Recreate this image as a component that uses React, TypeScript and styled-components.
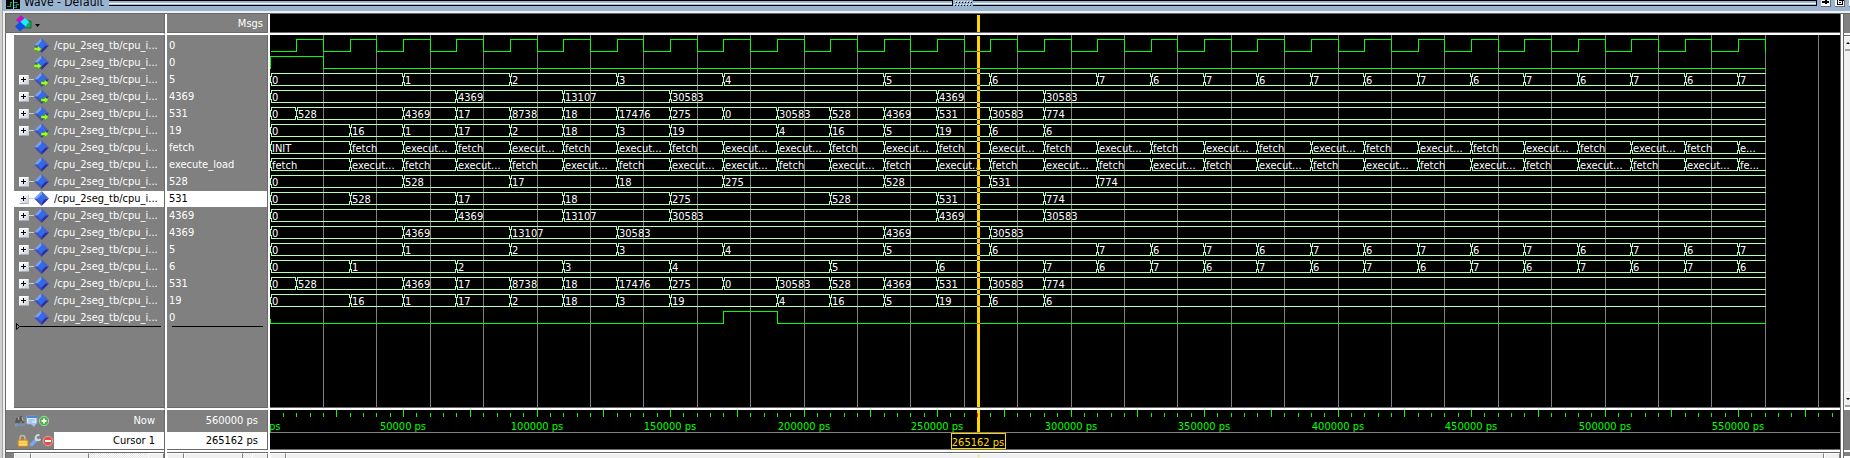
import React from "react";
import styled, { createGlobalStyle } from "styled-components";

/* ---------- data ---------- */

type Step = [number, string];
type Port = "in" | "out" | "none";
interface Signal {
  value: string;
  port: Port;
  bus?: Step[];
  bit?: Step[];
  expandable?: boolean;
  selected?: boolean;
}

const END = 560;
const F = "fetch";
const E = "execut...";

const alternate = (from: number, a: string, b: string): Step[] => {
  const out: Step[] = [];
  for (let t = from, i = 0; t < END; t += 20, i++) out.push([t, i % 2 ? b : a]);
  return out;
};

const clock: Step[] = [[0, "0"]];
for (let t = 10, i = 1; t <= END; t += 10, i++) clock.push([t, i % 2 ? "1" : "0"]);

const pc: Step[] = [[0, "0"], [50, "1"], [90, "2"], [130, "3"], [170, "4"], [230, "5"], [270, "6"], ...alternate(310, "7", "6")];
const nextPc: Step[] = [[0, "0"], [30, "1"], [70, "2"], [110, "3"], [150, "4"], [210, "5"], [250, "6"], [290, "7"], ...alternate(310, "6", "7")];
const dataA: Step[] = [[0, "0"], [70, "4369"], [110, "13107"], [150, "30583"], [250, "4369"], [290, "30583"]];
const dataB: Step[] = [[0, "0"], [50, "4369"], [90, "13107"], [130, "30583"], [230, "4369"], [270, "30583"]];
const memData: Step[] = [
  [0, "0"], [10, "528"], [50, "4369"], [70, "17"], [90, "8738"], [110, "18"], [130, "17476"], [150, "275"],
  [170, "0"], [190, "30583"], [210, "528"], [230, "4369"], [250, "531"], [270, "30583"], [290, "774"],
];
const address: Step[] = [
  [0, "0"], [30, "16"], [50, "1"], [70, "17"], [90, "2"], [110, "18"], [130, "3"], [150, "19"],
  [190, "4"], [210, "16"], [230, "5"], [250, "19"], [270, "6"], [290, "6"],
];
const state: Step[] = [
  [0, "INIT"], [30, F], [50, E], [70, F], [90, E], [110, F], [130, E], [150, F], [170, E], [190, E],
  [210, F], [230, E], [250, F], [270, E], [290, F], ...alternate(310, E, F).slice(0, -1), [550, "e..."],
];
const nextState: Step[] = [
  [0, F], [30, E], [50, F], [70, E], [90, F], [110, E], [130, F], [150, E], [170, E], [190, F],
  [210, E], [230, F], [250, E], [270, F], [290, E], ...alternate(310, F, E).slice(0, -1), [550, "fe..."],
];
const instr: Step[] = [[0, "0"], [50, "528"], [90, "17"], [130, "18"], [170, "275"], [230, "528"], [270, "531"], [310, "774"]];
const nextInstr: Step[] = [[0, "0"], [30, "528"], [70, "17"], [110, "18"], [150, "275"], [210, "528"], [250, "531"], [290, "774"]];

const signals: Signal[] = [
  { value: "0", port: "in", bit: clock },
  { value: "0", port: "in", bit: [[0, "1"], [20, "0"]] },
  { value: "5", port: "out", bus: pc, expandable: true },
  { value: "4369", port: "out", bus: dataA, expandable: true },
  { value: "531", port: "out", bus: memData, expandable: true },
  { value: "19", port: "out", bus: address, expandable: true },
  { value: "fetch", port: "none", bus: state },
  { value: "execute_load", port: "none", bus: nextState },
  { value: "528", port: "none", bus: instr, expandable: true },
  { value: "531", port: "none", bus: nextInstr, expandable: true, selected: true },
  { value: "4369", port: "none", bus: dataA, expandable: true },
  { value: "4369", port: "none", bus: dataB, expandable: true },
  { value: "5", port: "none", bus: pc, expandable: true },
  { value: "6", port: "none", bus: nextPc, expandable: true },
  { value: "531", port: "none", bus: memData, expandable: true },
  { value: "19", port: "none", bus: address, expandable: true },
  { value: "0", port: "none", bit: [[0, "0"], [170, "1"], [190, "0"]] },
];

/* ---------- shared measures ---------- */

const ROW = 17;
const LEAD = 2;
const CURSOR = 265.162;
const VISIBLE = 1200;
const px = (t: number) => Math.floor(0.05 + 2.67 * t);

const gray = "#808080";
const edge = "#6a6a6a";
const face = "#f0f0f0";
const blue = "#99b4d1";
const green = "#00ff00";
const busGreen = "#b4ffb4";
const gold = "#ffd700";
const ui = `"DejaVu Sans Condensed", "DejaVu Sans", sans-serif`;

const Global = createGlobalStyle`
  * { box-sizing: border-box; }
  body { margin: 0; background: ${face}; }
`;

/* ---------- frame ---------- */

const Window = styled.main`
  display: flex;
  flex-direction: column;
  height: 100vh;
  min-height: 400px;
  overflow: hidden;
  padding-left: 3px;
  background: linear-gradient(to right, #d0d0d0 0 2px, #a0a0a0 2px 3px, ${face} 3px);
  font: 11px/14px ${ui};
`;

const TitleBar = styled.header`
  display: flex;
  flex: none;
  align-items: flex-start;
  height: 11px;
  overflow: hidden;
  background: ${blue};
`;

const Title = styled.h1`
  margin: 0 5px 0 4px;
  font-size: 12px;
  line-height: 4px;
  font-weight: 400;
  color: #000;
  white-space: nowrap;
`;

const Stripes = styled.div`
  flex: 1;
  height: 6px;
  border-right: 1px solid #000;
  background: linear-gradient(#000 0 1px, ${blue} 1px 3px, #fff 3px 4px, ${blue} 4px 5px, #000 5px);
`;

const TitleButton = styled.button`
  flex: none;
  width: 10px;
  height: 7px;
  margin-left: 4px;
  padding: 0;
  border: 0;
  border-bottom: 1px solid ${edge};
  border-right: 1px solid ${edge};
  background: #fff;
  display: flex;
  &:last-child { margin-right: -9px; }
`;

const Body = styled.div`
  display: flex;
  flex: 1;
  min-height: 0;
  margin-top: 2px;
  border-top: 1px solid ${edge};
  border-left: 1px solid ${edge};
  margin-left: 2px;
`;

/* ---------- signal table ---------- */

const SignalTable = styled.table`
  flex: none;
  width: 264px;
  height: 100%;
  table-layout: fixed;
  border-collapse: separate;
  border-spacing: 0;
  background: ${gray};
  color: #fff;
`;

const NameCol = styled.col`
  width: 159px;
`;

const cellEdges = `
  padding: 0;
  font-weight: 400;
  white-space: nowrap;
  overflow: hidden;
`;

const NameCell = styled.td<{ $selected?: boolean }>`
  ${cellEdges}
  height: ${ROW}px;
  border-left: 8px solid #fff;
  border-right: 1px solid ${edge};
  background: ${(p) => (p.$selected ? `linear-gradient(${gray} 0 1px, #fff 1px)` : gray)};
  color: ${(p) => (p.$selected ? "#000" : "#fff")};
`;

const ValueCell = styled.td<{ $selected?: boolean }>`
  ${cellEdges}
  height: ${ROW}px;
  padding-left: 2px;
  line-height: ${ROW}px;
  border-left: 2px solid #fff;
  border-right: 2px solid #fff;
  box-shadow: inset -1px 0 ${edge};
  background: ${(p) => (p.$selected ? `linear-gradient(${gray} 0 1px, #fff 1px)` : gray)};
  color: ${(p) => (p.$selected ? "#000" : "#fff")};
`;

const HeadName = styled.th`
  ${cellEdges}
  height: 21px;
  padding-left: 9px;
  text-align: left;
  border-right: 1px solid ${edge};
  border-bottom: 2px solid #fff;
  box-shadow: inset 0 -1px ${edge};
`;

const HeadValue = styled.th`
  ${cellEdges}
  height: 21px;
  padding-right: 5px;
  text-align: right;
  border-left: 2px solid #fff;
  border-right: 2px solid #fff;
  border-bottom: 2px solid #fff;
  box-shadow: inset -1px -1px ${edge};
`;

const MenuButton = styled.button`
  display: block;
  padding: 0;
  border: 0;
  background: none;
  height: 18px;
`;

const LeadRow = styled.tr`
  td { height: ${LEAD}px; line-height: 0; }
`;

const RestRow = styled.tr`
  td {
    height: auto;
    vertical-align: top;
    overflow: visible;
    border-bottom: 2px solid #fff;
  }
  td:first-child { box-shadow: inset 0 -1px ${edge}; }
  td:last-child { box-shadow: inset -1px -1px ${edge}; }
`;

const InsertLine = styled.div<{ $end: number }>`
  height: 1px;
  margin: 0 ${(p) => p.$end}px 0 3px;
  background: #000;
`;

const InsertMark = styled.svg`
  display: block;
  margin: -4px 0 0 2px;
`;

const NameLine = styled.div`
  display: flex;
  align-items: center;
  height: ${ROW}px;
  padding-left: 5px;
`;

const Expander = styled.button`
  flex: none;
  width: 10px;
  height: 10px;
  padding: 0;
  border: 1px solid #fff;
  border-right-color: #c8ccd4;
  border-bottom-color: #a8acb8;
  border-radius: 1px;
  background: linear-gradient(135deg, #fff, #ccd2dc);
  display: flex;
  align-items: center;
  justify-content: center;
`;

const Connector = styled.span<{ $shown?: boolean }>`
  flex: none;
  width: 5px;
  height: 1px;
  margin-left: ${(p) => (p.$shown ? 0 : 10)}px;
  background: ${(p) => (p.$shown ? "#d0d0d0" : "transparent")};
`;

const DiamondSvg = styled.svg`
  display: block;
  flex: none;
`;

const SignalName = styled.span`
  padding-left: 5px;
  line-height: ${ROW}px;
`;

const FootName = styled.th<{ $light?: boolean }>`
  ${cellEdges}
  height: ${(p) => (p.$light ? 17 : 22)}px;
  border-right: 1px solid ${edge};
`;

const FootValue = styled.td<{ $light?: boolean }>`
  ${cellEdges}
  height: ${(p) => (p.$light ? 17 : 22)}px;
  padding-right: 10px;
  text-align: right;
  border-left: 2px solid #fff;
  border-right: 2px solid #fff;
  box-shadow: inset -1px 0 ${edge};
  background: ${(p) => (p.$light ? "#fff" : gray)};
  color: ${(p) => (p.$light ? "#000" : "#fff")};
`;

const FootLine = styled.div<{ $light?: boolean }>`
  display: flex;
  align-items: center;
  height: ${(p) => (p.$light ? 17 : 22)}px;
  padding-left: ${(p) => (p.$light ? 11 : 8)}px;
`;

const FootButton = styled.button<{ $wide?: boolean }>`
  flex: none;
  width: ${(p) => (p.$wide ? 13 : 12)}px;
  padding: 0;
  border: 0;
  background: none;
  display: flex;
`;

const FootLabel = styled.span<{ $light?: boolean }>`
  flex: 1;
  height: 100%;
  line-height: ${(p) => (p.$light ? 17 : 22)}px;
  padding-right: 9px;
  text-align: right;
  background: ${(p) => (p.$light ? "#fff" : gray)};
  color: ${(p) => (p.$light ? "#000" : "#fff")};
`;

const BarCell = styled.td<{ $inset?: boolean }>`
  padding: 0 0 0 ${(p) => (p.$inset ? 8 : 0)}px;
  height: 9px;
  vertical-align: top;
  border-right: ${(p) => (p.$inset ? `1px solid ${edge}` : "2px solid #fff")};
  ${(p) => (p.$inset ? "" : "border-left: 2px solid #fff;")}
`;

/* ---------- horizontal scrollbars ---------- */

const BarRule = styled.div<{ $inset?: boolean }>`
  height: 4px;
  margin-left: ${(p) => (p.$inset ? -8 : 0)}px;
  background: linear-gradient(${edge} 0 1px, #fff 1px 3px, ${edge} 3px);
`;

const Bar = styled.div`
  display: flex;
  height: 5px;
  background: repeating-conic-gradient(#fff 0 25%, #e4e4e4 0 50%) 0 0 / 2px 2px;
`;

const BarPart = styled.div<{ $w?: number; $push?: boolean }>`
  ${(p) => (p.$w ? `flex: 0 0 ${p.$w}px;` : "flex: 1;")}
  ${(p) => (p.$push ? "margin-left: auto;" : "")}
  background: ${face};
  border-top: 1px solid #fff;
  border-left: 1px solid #fff;
  border-right: 1px solid ${gray};
`;

const CursorTick = styled.div`
  width: 1px;
  height: 2px;
  margin: 1px 0 0 691px;
  background: ${gold};
`;

/* ---------- waves ---------- */

const WavePane = styled.section`
  display: flex;
  flex: 1;
  flex-direction: column;
  min-width: 0;
  background: #000;
`;

const Strip = styled.svg`
  display: block;
  flex: none;
  width: 100%;
  height: 21px;
  border-bottom: 2px solid #fff;
  box-shadow: inset 0 -1px ${edge};
`;

const WaveArea = styled.svg`
  display: block;
  flex: 1 1 0;
  width: 100%;
  min-height: 0;
`;

const Timeline = styled.svg`
  display: block;
  flex: none;
  width: 100%;
  height: 39px;
`;

const Rule = styled.div`
  flex: none;
  height: 3px;
  background: linear-gradient(${edge} 0 1px, #fff 1px);
`;

const SvgText = styled.text`
  font: 11px ${ui};
`;

/* ---------- right edge ---------- */

const SidePane = styled.aside`
  display: flex;
  flex: none;
  flex-direction: column;
  width: 10px;
  border-left: 1px solid ${edge};
  box-shadow: inset 2px 0 #fff, inset 3px 0 ${edge};
  padding-left: 3px;
`;

const SideBlock = styled.div<{ $h: number }>`
  flex: none;
  height: ${(p) => p.$h}px;
  background: ${gray};
  border-bottom: 2px solid #fff;
`;

const SideTrack = styled.div`
  display: flex;
  flex: 1;
  flex-direction: column;
  justify-content: space-between;
  min-height: 0;
  padding-left: 1px;
  border-top: 1px solid ${edge};
  border-bottom: 3px solid #fff;
  background: ${face};
`;

const ScrollButton = styled.button`
  height: 15px;
  padding: 0 0 0 1px;
  border: 0;
  border-top: 1px solid #fff;
  border-bottom: 2px solid #a0a0a0;
  background: ${face};
  display: flex;
  align-items: center;
  overflow: hidden;
`;

/* ---------- icons ---------- */

const WaveIcon = () => (
  <svg width="17" height="10" viewBox="0 0 17 10" shapeRendering="crispEdges" aria-hidden="true">
    <rect x="3" width="14" height="9" fill="#000" />
    <path d="M4 6h3v-4h2M11 2h4M11 7h2v-3h3" stroke="#18a048" fill="none" />
    <path d="M10 0v9" stroke="#30e8e8" />
    <path d="M11 5h3" stroke="#3030e0" />
  </svg>
);

const ObjectIcon = () => (
  <svg width="28" height="18" viewBox="0 0 28 18" aria-hidden="true">
    <path d="M1 5l5-5 5 5-5 5z" fill="#c010c8" />
    <path d="M8 6h8v7H8z" fill="#18a85c" stroke="#0a7040" />
    <path d="M4 8l6-5 4 4-4 5z" fill="#20e8ff" />
    <path d="M0 11.500l5-5 5.500 5-5.500 5z" fill="#1050e8" />
    <path d="M20 9h5l-2.500 3z" fill="#000" />
  </svg>
);

const Diamond = ({ port }: { port: Port }) => (
  <DiamondSvg width="15" height="15" viewBox="0 0 15 15" aria-hidden="true">
    <path d="M7.500 0L0 7.500h4l3.500-3.500z" fill="#7aa0ee" />
    <path d="M7.500 0L15 7.500h-4L7.500 4z" fill="#4a62c8" />
    <path d="M0 7.500L7.500 15v-4L4 7.500z" fill="#4450b8" />
    <path d="M15 7.500L7.500 15v-4L11 7.500z" fill="#2c2ca0" />
    <path d="M7.500 3.500l4 4-4 4-4-4z" fill="#2a6cf4" />
    {port !== "none" && (
      <path
        transform={port === "in" ? "translate(0 7)" : "translate(7 7)"}
        d="M0 2.500h3.500V0.500L7.700 4 3.500 7.500V5.500H0z"
        fill="#a4f828"
        stroke="#2a8a10"
        strokeWidth="0.500"
      />
    )}
  </DiamondSvg>
);

const Plus = () => (
  <svg width="6" height="6" viewBox="0 0 6 6" shapeRendering="crispEdges" aria-hidden="true">
    <path d="M2 0h1v2h2v1H3v2H2V3H0V2h2z" fill="#000" />
  </svg>
);

const FindIcon = () => (
  <svg width="12" height="12" viewBox="0 0 12 12" aria-hidden="true">
    <path d="M1 8l1-5 2-1 1 2 1-3 2 0 2 7H8L7 6 5 8z" fill="#585858" />
    <path d="M4 2l1 3M8 2l1 4" stroke="#b0b0b0" />
    <path d="M1 10h10M1 10l2-1.500M1 10l2 1.500" stroke="#6fa0d8" fill="none" />
  </svg>
);

const SheetIcon = () => (
  <svg width="12" height="12" viewBox="0 0 12 12" aria-hidden="true">
    <rect x="0.500" y="1" width="10.500" height="8" rx="1" fill="#d4e6fa" stroke="#78a0d0" />
    <path d="M1 2h10" stroke="#4a88d8" strokeWidth="2" />
    <path d="M2.500 5h6M2.500 7h4" stroke="#88a8cc" />
    <path d="M5 9h5l-2 3z" fill="#9cc0ec" />
  </svg>
);

const RoundIcon = ({ color, plus }: { color: string; plus?: boolean }) => (
  <svg width="12" height="12" viewBox="0 0 12 12" aria-hidden="true">
    <circle cx="6" cy="6" r="4.700" fill={color} stroke={plus ? "#a8dca0" : "#f0a098"} />
    <path d={plus ? "M3.500 6h5M6 3.500v5" : "M3 6h6"} stroke="#fff" strokeWidth="2" />
  </svg>
);

const LockIcon = () => (
  <svg width="12" height="13" viewBox="0 0 12 13" aria-hidden="true">
    <path d="M3 6V4a2.500 2.500 0 015 0v2" fill="none" stroke="#c8b890" strokeWidth="1.500" />
    <rect x="1" y="6" width="10" height="6.500" rx="1" fill="#f4c040" stroke="#c88c20" />
    <path d="M2 8h8M2 10.500h8" stroke="#ffe090" />
  </svg>
);

const WrenchIcon = () => (
  <svg width="13" height="13" viewBox="0 0 13 13" aria-hidden="true">
    <path d="M2.500 10.500L6.500 6.500" stroke="#78aaf0" strokeWidth="3.500" strokeLinecap="round" />
    <path d="M6.500 6.500L8.500 4.500" stroke="#d0dae6" strokeWidth="2.500" />
    <path d="M10.500 1.500a2.500 2.500 0 10 .8 3.500" fill="none" stroke="#d0dae6" strokeWidth="1.800" />
  </svg>
);

/* ---------- wave drawing ---------- */

const cursorX = px(CURSOR);

const bitPath = (steps: Step[]) => {
  const y = (v: string) => (v === "1" ? 2 : 14);
  let d = `M0 ${steps[0][1] === "1" ? 14 : 10}V${y(steps[0][1])}`;
  if (steps === clock) d = "M1 14";
  steps.slice(1).forEach(([t, v]) => {
    d += `H${px(t)}V${y(v)}`;
  });
  return `${d}H${px(END)}`;
};

const busPath = (steps: Step[]) =>
  steps
    .map(([t], i) => {
      const a = px(t);
      const last = i === steps.length - 1;
      const b = last ? px(END) : px(steps[i + 1][0]);
      const right = last
        ? `M${a + 1} 2H${b}M${a + 1} 14H${b}`
        : `M${a + 1} 2H${b - 1}V5M${a + 1} 14H${b - 1}V11`;
      return `${right}M${a + 1} 2V5M${a + 1} 14V11M${a} 5V11`;
    })
    .join("");

const Trace = ({ signal, row }: { signal: Signal; row: number }) => {
  const top = LEAD + row * ROW;
  return (
    <g transform={`translate(0 ${top})`}>
      <g transform="translate(0.500 0.500)" fill="none" strokeLinecap="square" shapeRendering="crispEdges">
        {signal.bit && <path d={bitPath(signal.bit)} stroke={green} />}
        {signal.bus && <path d={busPath(signal.bus)} stroke={busGreen} />}
      </g>
      {signal.bus?.map(([t, label]) => (
        <SvgText key={t} x={px(t) + 2} y={13} fill="#fff">
          {label}
        </SvgText>
      ))}
    </g>
  );
};

const range = (step: number, from = step) => {
  const out: number[] = [];
  for (let t = from; t <= VISIBLE; t += step) out.push(t);
  return out;
};

const Waves = () => (
  <WaveArea role="img" aria-label="Signal waveforms">
    {range(20).map((t) => (
      <rect key={t} x={px(t)} width="1" height="100%" fill={gray} />
    ))}
    {signals.map((s, i) => (
      <Trace key={i} signal={s} row={i} />
    ))}
    <rect x={cursorX - 1} y="1" width="3" height="100%" fill={gold} />
    {signals.map((s, i) =>
      (s.bus ? [2, 14] : [14]).map((y) => (
        <rect key={`${i}-${y}`} x={cursorX - 1} y={LEAD + i * ROW + y} width="3" height="1" fill={s.bus ? "#4b28b4" : "#ff2800"} />
      ))
    )}
  </WaveArea>
);

const TimeScale = () => (
  <Timeline role="img" aria-label="Time scale">
    {range(5).map((t) => (
      <rect key={t} x={px(t)} y={t % 25 ? 3 : 0} width="1" height={t % 25 ? 4 : 7} fill={green} />
    ))}
    {range(50, 0)
      .filter((t) => t < 600)
      .map((t) => (
        <SvgText key={t} x={px(t)} y={20} textAnchor="middle" fill={green}>
          {`${t * 1000} ps`}
        </SvgText>
      ))}
    <rect y="22" width="100%" height="1" fill={gray} />
    <rect x={cursorX - 1} width="3" height="22" fill={gold} />
    <rect x={cursorX - 1} y="3" width="1" height="4" fill="#ff2800" />
    <rect x={cursorX - 27} y="23" width="55" height="16" fill="#000" />
    <path d={`M${cursorX - 27} 23h55v16h-55zM${cursorX - 26} 24v14h53v-14z`} fill={gold} fillRule="evenodd" />
    <SvgText x={cursorX} y={36} textAnchor="middle" fill={gold}>
      265162 ps
    </SvgText>
  </Timeline>
);

/* ---------- page ---------- */

export default function App() {
  return (
    <>
      <Global />
      <Window>
        <TitleBar>
          <WaveIcon />
          <Title>Wave - Default</Title>
          <Stripes />
          <svg width="20" height="7" viewBox="0 0 20 7" aria-hidden="true" shapeRendering="crispEdges">
            <path d="M2 1.500h17M1 4.500h17" stroke="#fff" strokeDasharray="1 2" />
            <path d="M3 2.500h17M2 5.500h17" stroke="#000" strokeDasharray="1 2" />
          </svg>
          <Stripes />
          <TitleButton aria-label="Add pane">
            <svg width="9" height="6" viewBox="0 0 9 6" shapeRendering="crispEdges">
              <path d="M4 0h2v4H4zM1 1h7v2H1z" fill="#000" />
            </svg>
          </TitleButton>
          <TitleButton aria-label="Undock">
            <svg width="9" height="6" viewBox="0 0 9 6" shapeRendering="crispEdges">
              <path d="M2 0v4h5V0M4 0h5M4 2h2" stroke="#000" fill="none" />
            </svg>
          </TitleButton>
          <TitleButton aria-label="Close" />
        </TitleBar>

        <Body>
          <SignalTable>
            <colgroup>
              <NameCol />
              <col />
            </colgroup>
            <thead>
              <tr>
                <HeadName>
                  <MenuButton aria-label="Object menu">
                    <ObjectIcon />
                  </MenuButton>
                </HeadName>
                <HeadValue>Msgs</HeadValue>
              </tr>
            </thead>
            <tbody>
              <LeadRow>
                <NameCell />
                <ValueCell />
              </LeadRow>
              {signals.map((s, i) => (
                <tr key={i}>
                  <NameCell $selected={s.selected}>
                    <NameLine>
                      {s.expandable && (
                        <Expander aria-label="Expand signal">
                          <Plus />
                        </Expander>
                      )}
                      <Connector $shown={s.expandable} />
                      <Diamond port={s.port} />
                      <SignalName>/cpu_2seg_tb/cpu_i...</SignalName>
                    </NameLine>
                  </NameCell>
                  <ValueCell $selected={s.selected}>{s.value}</ValueCell>
                </tr>
              ))}
              <RestRow>
                <NameCell>
                  <InsertLine $end={3} />
                  <InsertMark width="5" height="7" viewBox="0 0 5 7">
                    <path d="M0.500 0.500l3 3-3 3z" fill={gray} stroke="#000" />
                  </InsertMark>
                </NameCell>
                <ValueCell>
                  <InsertLine $end={5} />
                </ValueCell>
              </RestRow>
            </tbody>
            <tfoot>
              <tr>
                <FootName>
                  <FootLine>
                    <FootButton aria-label="Find"><FindIcon /></FootButton>
                    <FootButton aria-label="Edit time"><SheetIcon /></FootButton>
                    <FootButton aria-label="Add cursor"><RoundIcon color="#48b048" plus /></FootButton>
                    <FootLabel>Now</FootLabel>
                  </FootLine>
                </FootName>
                <FootValue>560000 ps</FootValue>
              </tr>
              <tr>
                <FootName $light>
                  <FootLine $light>
                    <FootButton aria-label="Lock cursor"><LockIcon /></FootButton>
                    <FootButton $wide aria-label="Cursor properties"><WrenchIcon /></FootButton>
                    <FootButton aria-label="Remove cursor"><RoundIcon color="#e05048" /></FootButton>
                    <FootLabel $light>Cursor 1</FootLabel>
                  </FootLine>
                </FootName>
                <FootValue $light>265162 ps</FootValue>
              </tr>
              <tr>
                <BarCell $inset>
                  <BarRule $inset />
                  <Bar>
                    <BarPart $w={17} />
                    <BarPart $w={58} />
                    <BarPart $w={16} $push />
                  </Bar>
                </BarCell>
                <BarCell>
                  <BarRule />
                  <Bar>
                    <BarPart $w={17} />
                    <BarPart $w={59} />
                    <BarPart $w={16} $push />
                  </Bar>
                </BarCell>
              </tr>
            </tfoot>
          </SignalTable>

          <WavePane>
            <Strip aria-hidden="true">
              <rect x={cursorX - 1} y="1" width="3" height="17" fill={gold} />
            </Strip>
            <Waves />
            <Rule />
            <TimeScale />
            <BarRule />
            <Bar>
              <BarPart $w={16} />
              <BarPart>
                <CursorTick />
              </BarPart>
              <BarPart $w={16} $push />
            </Bar>
          </WavePane>

          <SidePane>
            <SideBlock $h={21} />
            <SideTrack>
              <ScrollButton aria-label="Scroll up">
                <svg width="8" height="4" viewBox="0 0 8 4"><path d="M0 4h8L4 0z" fill="#000" /></svg>
              </ScrollButton>
              <ScrollButton aria-label="Scroll down">
                <svg width="8" height="4" viewBox="0 0 8 4"><path d="M0 0h8L4 4z" fill="#000" /></svg>
              </ScrollButton>
            </SideTrack>
            <SideBlock $h={42} />
            <SideBlock $h={6} />
          </SidePane>
        </Body>
      </Window>
    </>
  );
}
